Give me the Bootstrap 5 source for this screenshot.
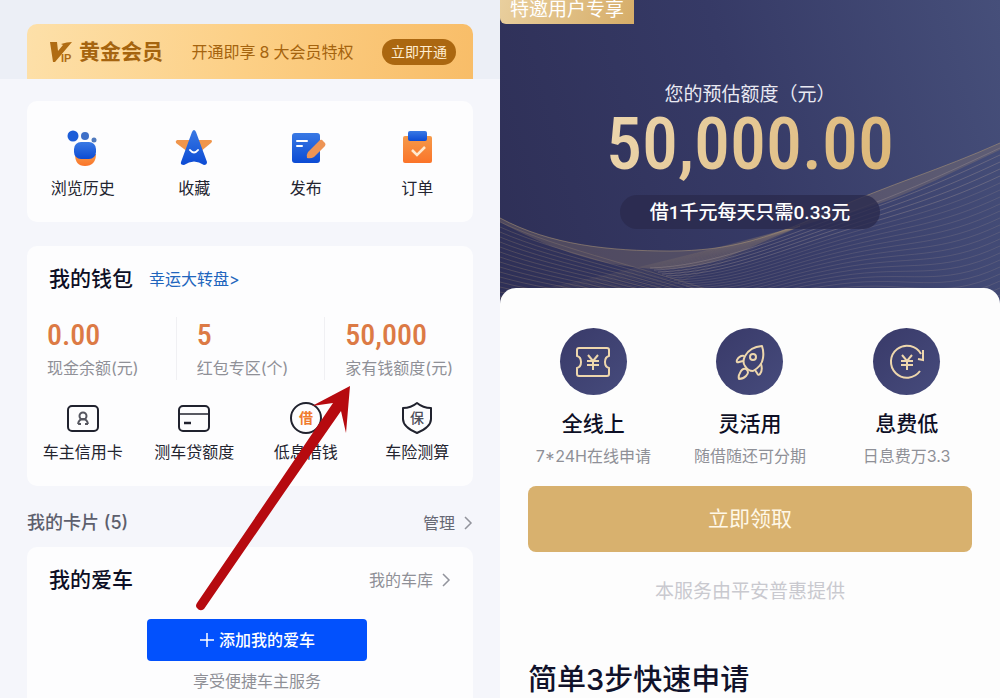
<!DOCTYPE html>
<html lang="zh-CN">
<head>
<meta charset="utf-8">
<meta name="viewport" content="width=device-width, initial-scale=1">
<title>我的钱包</title>
<link href="https://cdn.jsdelivr.net/npm/bootstrap@5.3.0/dist/css/bootstrap.min.css" rel="stylesheet">
<style>
  body { font-family: Inter, "Noto Sans CJK SC", sans-serif; font-size: 16px; line-height: 24px; color: #23242f; background: #f5f6fb; }
  a { text-decoration: none; color: inherit; }
  h1, h2, h3, p { margin: 0; }
  svg { display: block; }
  .t-title { font-size: 21px; line-height: 28px; font-weight: 500; color: #0d0f25; }
  .t-grey { color: #8f9097; }
  .narrow-num { font-family: "Roboto Condensed", "Liberation Sans Narrow", sans-serif; font-weight: 500; }

  .wallet { background: linear-gradient(#eceff6 0 79px, #f5f6fb 79px); padding: 24px 27px 0; }
  .vip { padding: 10px 17px 10px 23px; border-radius: 10px 10px 0 0; background: linear-gradient(100deg, #fde0a9, #fccf85 50%, #f8bd68); color: #a5640f; height: 55px; }
  .vip-logo { color: #b06c12; font-family: "Liberation Sans", sans-serif; }
  .vip-name { font-size: 21px; font-weight: 700; margin-left: 7px; }
  .vip .btn { background: #ab6710; color: #ffedd0; font-size: 14px; line-height: 20px; padding: 3px 9px; border: 0; }
  .panel { background: #fdfdfe; border-radius: 10px; }
  .shortcuts { padding: 27px 0 22px; margin-top: 22px; }
  .purse { margin-top: 24px; padding: 19px 0 22px; }
  .px-title { padding-left: 22px; padding-right: 22px; }
  .lucky { color: #2165bd; }
  .stat { padding-left: 20px; white-space: nowrap; }
  .stat + .stat { border-left: 1px solid #f0f0f3; }
  .stat strong { display: block; font-size: 30px; line-height: 36px; color: #dc7a45; margin-bottom: 3px; }
  .tools { margin-top: 20px; }
  .cards-head { margin-top: 23px; color: #5d5f6d; line-height: 28px; }
  .cards-head h2 { font-size: 18px; line-height: 28px; }
  .cards-head a { color: #666874; }
  .car { margin-top: 10px; padding-top: 19px; border-radius: 10px 10px 0 0; }
  .car-body { padding: 25px 0 3px 14px; }
  .add-car { background: #0251fd; color: #fff; width: 220px; height: 42px; border-radius: 4px; font-weight: 500; border: 0; }
  .pointer { position: absolute; left: 190px; top: 380px; pointer-events: none; }

  .loan { background: linear-gradient(75deg, #2e2f56, #363a66 50%, #464f7a) 0 0 / 100% 320px no-repeat #fdfdfd; }
  .hero { padding-bottom: 75px; color: #fff; }
  .waves { position: absolute; inset: 0; width: 100%; height: 100%; }
  .invite { padding: 0 10px 4px; font-size: 19px; line-height: 20px; border-radius: 0 0 0 6px; background: linear-gradient(110deg, #e9cf9e, #d6ad68); }
  .quota { margin-top: 57px; font-size: 19px; line-height: 28px; color: #e9e9f2; }
  .amount { font-size: 72px; line-height: 72px; background: linear-gradient(115deg, #ecd6ae, #dcb676); -webkit-background-clip: text; background-clip: text; color: transparent; }
  .rate { margin-top: 14px; padding: 4px 30px 2px; font-family: Roboto, "Noto Sans CJK SC", sans-serif; font-size: 19px; line-height: 28px; font-weight: 500; background: rgba(43, 42, 77, .8); }
  .sheet { margin-top: -16px; border-radius: 16px 16px 0 0; background: #fdfdfd; padding: 40px 28px 1px; }
  .perks { margin: 0 -13px; }
  .disc { width: 67px; height: 67px; background: linear-gradient(135deg, #393a69, #464b7c); }
  .perks h2 { margin-top: 15px; margin-bottom: 6px; }
  .claim { margin-top: 18px; height: 66px; border-radius: 8px; background: #d8b16e; color: #fff8e8; font-size: 21px; border: 0; }
  .provider { margin-top: 26px; font-size: 19px; line-height: 28px; color: #c9c9cf; }
  .steps { margin-top: 56px; font-size: 29px; line-height: 36px; font-weight: 500; color: #10122b; }
</style>
</head>
<body>
<div class="row g-0 min-vh-100">
  <main class="col-6 wallet position-relative d-flex flex-column">
    <div class="vip d-flex align-items-center justify-content-between">
      <div class="d-flex align-items-center">
        <svg class="vip-logo" width="22" height="24" viewBox="0 0 22 24" fill="currentColor" role="img" aria-label="VIP"><path d="M0 2h7l1 9 5-6-2-1q6-2 11-2L5 22H3z"/><text x="11" y="22" font-size="11" font-weight="700">IP</text></svg>
        <span class="vip-name">黄金会员</span>
      </div>
      <span>开通即享<span class="mx-1">8</span>大会员特权</span>
      <button class="btn rounded-pill" type="button">立即开通</button>
    </div>

    <nav class="panel shortcuts row row-cols-4 g-0 text-center">
      <a href="#" class="col"><svg class="mx-auto mb-2" width="40" height="40" viewBox="0 0 40 40"><defs><linearGradient id="bl" x2="0" y2="1"><stop stop-color="#3979e4"/><stop offset="1" stop-color="#0c4bd4"/></linearGradient><linearGradient id="og" x2="0" y2="1"><stop stop-color="#f59a4a"/><stop offset="1" stop-color="#fb7429"/></linearGradient></defs><path d="M12 26h21c0 8-4 12-11 12S12 34 12 26z" fill="url(#og)"/><rect x="11" y="14" width="22" height="17" rx="7" fill="url(#bl)"/><circle cx="10" cy="8" r="5.500" fill="#1c5dd8"/><circle cx="22" cy="8" r="4" fill="#3f70c8"/><circle cx="31" cy="12" r="2.500" fill="#4f79bd"/></svg>浏览历史</a>
      <a href="#" class="col"><svg class="mx-auto mb-2" width="40" height="40" viewBox="0 0 40 40"><path d="M3 12h34q2 1 0 3L26 24H14L2 15q-1-2 1-3z" fill="#f0964c"/><path d="M18 4q2-4 4 0l11 30q0 3-3 3-10-7-20 0-4 0-3-3z" fill="url(#bl)"/><path d="M16 22q4 5 8 0" fill="none" stroke="#fff" stroke-width="2" stroke-linecap="round"/></svg>收藏</a>
      <a href="#" class="col"><svg class="mx-auto mb-2" width="40" height="40" viewBox="0 0 40 40"><rect x="6" y="5" width="28" height="30" rx="3" fill="url(#bl)"/><path d="M11 13h10M11 18h5" stroke="#fff" stroke-width="2" stroke-linecap="round"/><path d="M22 24 34 12q2-1 3 1l2 2q1 1 0 3L28 29q-3 2-7 1-1-3 1-6z" fill="#ed9455"/></svg>发布</a>
      <a href="#" class="col"><svg class="mx-auto mb-2" width="40" height="40" viewBox="0 0 40 40"><rect x="6" y="8" width="29" height="27" rx="2" fill="url(#og)"/><rect x="11" y="3" width="19" height="10" rx="2" fill="url(#bl)"/><path d="m15 22 5 5 8-8" fill="none" stroke="#ffe9cf" stroke-width="2.500"/></svg>订单</a>
    </nav>

    <section class="panel purse">
      <div class="px-title d-flex align-items-center">
        <h1 class="t-title">我的钱包</h1>
        <a href="#" class="lucky ms-3">幸运大转盘&gt;</a>
      </div>
      <div class="row row-cols-3 g-0 mt-4 t-grey">
        <div class="col stat"><strong class="narrow-num">0.00</strong>现金余额(元)</div>
        <div class="col stat"><strong class="narrow-num">5</strong>红包专区(个)</div>
        <div class="col stat"><strong class="narrow-num">50,000</strong>家有钱额度(元)</div>
      </div>
      <nav class="tools row row-cols-4 g-0 text-center">
        <a href="#" class="col"><svg class="mx-auto mb-1" width="36" height="36" viewBox="0 0 36 36" fill="none" stroke="#20222e" stroke-width="2"><rect x="3" y="6" width="30" height="25" rx="4"/><g stroke="#55565f"><circle cx="18" cy="16" r="3.500"/><path d="M13 24q1-5 5-5t5 5M13 24h3M20 24h3"/></g></svg>车主信用卡</a>
        <a href="#" class="col"><svg class="mx-auto mb-1" width="36" height="36" viewBox="0 0 36 36" fill="none" stroke="#20222e" stroke-width="2"><rect x="3" y="6" width="30" height="25" rx="4"/><path d="M3 14h30" stroke-width="1.500"/><path d="M8 23h7" stroke-width="2.500"/></svg>测车贷额度</a>
        <a href="#" class="col"><svg class="mx-auto mb-1" width="36" height="36" viewBox="0 0 36 36"><circle cx="18" cy="18" r="15" fill="none" stroke="#20222e" stroke-width="2"/><text x="18" y="23" font-size="14" font-weight="700" text-anchor="middle" fill="#f07c2e">借</text></svg>低息借钱</a>
        <a href="#" class="col"><svg class="mx-auto mb-1" width="36" height="36" viewBox="0 0 36 36"><path d="M18 3q6 5 14 5v11q0 8-14 14Q4 27 4 19V8q8 0 14-5z" fill="none" stroke="#20222e" stroke-width="2" stroke-linejoin="round"/><text x="18" y="23" font-size="14" font-weight="500" text-anchor="middle" fill="#4c4d57">保</text></svg>车险测算</a>
      </nav>
    </section>

    <div class="cards-head d-flex justify-content-between">
      <h2>我的卡片 (5)</h2>
      <a href="#" class="d-flex align-items-center gap-2">管理 <svg width="10" height="16" viewBox="0 0 10 16" fill="none" stroke="#92949c" stroke-width="1.500"><path d="m2 2 6 6-6 6"/></svg></a>
    </div>

    <section class="panel car flex-grow-1">
      <div class="px-title d-flex justify-content-between align-items-center">
        <h2 class="t-title">我的爱车</h2>
        <a href="#" class="t-grey d-flex align-items-center gap-2">我的车库 <svg width="10" height="16" viewBox="0 0 10 16" fill="none" stroke="#92949c" stroke-width="1.500"><path d="m2 2 6 6-6 6"/></svg></a>
      </div>
      <div class="car-body text-center">
        <button type="button" class="add-car d-inline-flex align-items-center justify-content-center gap-1"><svg width="16" height="16" viewBox="0 0 16 16" stroke="#fff" stroke-width="1.500"><path d="M1 8h14M8 1v14"/></svg>添加我的爱车</button>
        <p class="t-grey mt-2">享受便捷车主服务</p>
      </div>
    </section>

    <svg class="pointer" width="170" height="235" viewBox="190 380 170 235" fill="#b60a0f"><path d="M350 386 346 433 341 411 286 490 204 609Q200 612 197 608 195 606 197 603L274 490 333 403 312 406z"/></svg>
  </main>

  <section class="col-6 loan">
    <header class="hero position-relative">
      <svg class="waves" id="waves" viewBox="0 0 500 304" preserveAspectRatio="none" fill="none"><path d="M0 218C50 245 110 251 170 251S270 238 330 211 440 170 500 143V150C440 178 390 205 330 218S240 262 180 268 50 250 0 222z" fill="#a08a70" fill-opacity=".28"/></svg>
      <div class="position-relative d-flex flex-column align-items-center">
        <span class="invite align-self-start">特邀用户专享</span>
        <p class="quota">您的预估额度（元）</p>
        <strong class="amount narrow-num">50,000.00</strong>
        <span class="rate rounded-pill">借1千元每天只需0.33元</span>
      </div>
    </header>
    <div class="sheet position-relative">
      <div class="perks row row-cols-3 g-0 text-center">
        <div class="col">
          <div class="disc rounded-circle mx-auto d-flex align-items-center justify-content-center"><svg width="40" height="40" viewBox="0 0 40 40" fill="none" stroke="#eed7ad" stroke-width="2" stroke-linejoin="round"><path d="M6 6h28q2 0 2 2v6q-4 1-4 6t4 6v6q0 2-2 2H6q-2 0-2-2v-6q4-1 4-6t-4-6V8q0-2 2-2z"/><path d="m15 13 5 6 5-6M20 19v9M14 19h12M14 23h12"/></svg></div>
          <h2 class="t-title">全线上</h2><p class="t-grey">7*24H在线申请</p>
        </div>
        <div class="col">
          <div class="disc rounded-circle mx-auto d-flex align-items-center justify-content-center"><svg width="40" height="40" viewBox="0 0 40 40" fill="none" stroke="#eed7ad" stroke-width="2" stroke-linejoin="round"><path d="M32 4q-12 1-17 10-3 6 0 10 3 5 8 5 9-5 10-13 1-6-1-12z"/><circle cx="23" cy="15" r="3"/><path d="M14 14q-4-1-7 4-1 3 2 2l4-1M31 22q2 6-1 10-2 2-3-1l-2-3M16 27q-4-1-6 4-2 3-1 6 4 0 7-3 4-4 0-7z"/></svg></div>
          <h2 class="t-title">灵活用</h2><p class="t-grey">随借随还可分期</p>
        </div>
        <div class="col">
          <div class="disc rounded-circle mx-auto d-flex align-items-center justify-content-center"><svg width="40" height="40" viewBox="0 0 40 40" fill="none" stroke="#eed7ad" stroke-width="2"><path d="M33 29A16 16 0 1 1 34 12M36 8v10l-5-1"/><path d="m15 13 5 6 5-6M20 19v9M14 19h12M14 23h12"/></svg></div>
          <h2 class="t-title">息费低</h2><p class="t-grey">日息费万3.3</p>
        </div>
      </div>
      <button type="button" class="claim w-100 d-block">立即领取</button>
      <p class="provider text-center">本服务由平安普惠提供</p>
      <h2 class="steps">简单3步快速申请</h2>
    </div>
  </section>
</div>
<script src="https://cdn.jsdelivr.net/npm/bootstrap@5.3.0/dist/js/bootstrap.bundle.min.js"></script>
<script>
  // Fan of fine curves along the bottom of the hero
  const waves = document.getElementById('waves');
  const line = (d, color, opacity) => {
    const p = document.createElementNS('http://www.w3.org/2000/svg', 'path');
    p.setAttribute('d', d);
    p.setAttribute('stroke', color);
    p.setAttribute('stroke-opacity', opacity);
    waves.appendChild(p);
  };
  // bright leading edge
  line('M0 218C50 245 110 251 170 251S270 238 330 211 440 170 500 143', '#b39b78', 0.5);
  // right-hand fan
  for (let i = 0; i < 24; i++) {
    line(`M${150 + i * 4} ${268 + i * 2}C${210 + i * 4} ${266 + i * 2} 270 ${242 + i * 3} 340 ${216 + i * 4}S440 ${176 + i * 7} 500 ${148 + i * 7}`, '#9a8f90', i < 5 ? 0.4 : 0.24);
  }
  // left-hand mesh, two crossing families
  for (let i = 0; i < 16; i++) {
    line(`M0 ${222 + i * 5}C60 ${250 + i * 4} 150 ${268 + i * 3} 250 ${304 + i * 3}`, '#a99374', 0.26);
    line(`M${-80 + i * 12} 304C${i * 10} 300 ${60 + i * 9} ${290 - i} 300 226`, '#a99374', 0.13);
  }
</script>
</body>
</html>
